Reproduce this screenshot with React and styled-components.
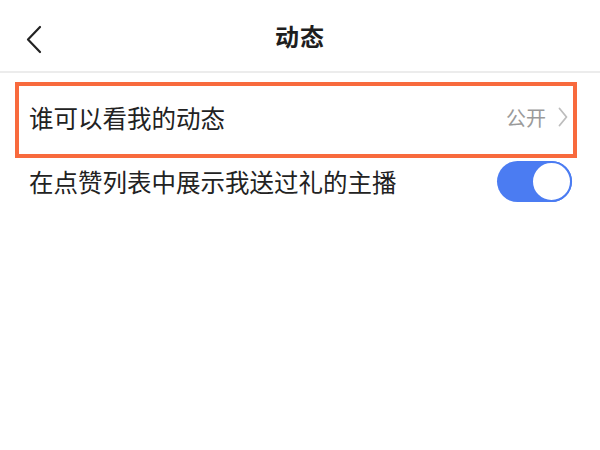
import styled, { createGlobalStyle } from "styled-components";

const GlobalStyle = createGlobalStyle`
  html, body {
    margin: 0;
    padding: 0;
    background: #ffffff;
  }
  body {
    font-family: "Noto Sans CJK SC", "Noto Sans", sans-serif;
  }
`;

const Page = styled.div`
  width: 600px;
  height: 450px;
  background: #ffffff;
  display: flex;
  flex-direction: column;
`;

const Header = styled.header`
  position: relative;
  height: 71px;
  display: flex;
  align-items: center;
  justify-content: center;
  border-bottom: 2px solid #ececec;
`;

const BackButton = styled.button`
  position: absolute;
  left: 25px;
  top: 25px;
  padding: 0;
  border: none;
  background: none;
  display: flex;
`;

const Title = styled.h1`
  margin: 0;
  font-size: 24px;
  font-weight: 700;
  color: #1e1e1e;
  letter-spacing: 1px;
`;

const List = styled.div`
  display: flex;
  flex-direction: column;
`;

const Highlight = styled.div`
  margin: 9px 23px 0 15px;
  border: 4px solid #f86a3d;
`;

const Row = styled.div`
  display: flex;
  align-items: center;
  justify-content: space-between;
  height: ${(p) => p.$height}px;
  padding: ${(p) => p.$pad};
`;

const Label = styled.span`
  font-size: 24.5px;
  color: #222222;
`;

const Value = styled.span`
  display: flex;
  align-items: center;
  gap: 12px;
  font-size: 20px;
  color: #9a9a9a;
`;

const Toggle = styled.div`
  width: 75px;
  height: 41px;
  border-radius: 21px;
  background: ${(p) => (p.$on ? "#4b7cf2" : "#dcdcdc")};
  display: flex;
  align-items: center;
  justify-content: ${(p) => (p.$on ? "flex-end" : "flex-start")};
  box-sizing: border-box;
`;

const Knob = styled.div`
  width: 41px;
  height: 41px;
  border-radius: 50%;
  background: #ffffff;
  border: 2px solid #4b7cf2;
  box-sizing: border-box;
`;

export default function App() {
  return (
    <Page>
      <GlobalStyle />
      <Header>
        <BackButton>
          <svg width="17" height="29" viewBox="0 0 17 29">
            <path d="M15 2 L3 14.5 L15 27" fill="none" stroke="#222" strokeWidth="2.2" strokeLinecap="round" strokeLinejoin="round" />
          </svg>
        </BackButton>
        <Title>动态</Title>
      </Header>
      <List>
        <Highlight>
          <Row $height={62} $pad="0 5px 6px 10px">
            <Label>谁可以看我的动态</Label>
            <Value>
              公开
              <svg width="10" height="20" viewBox="0 0 10 20">
                <path d="M1.5 1.5 L8.5 10 L1.5 18.5" fill="none" stroke="#bdbdbd" strokeWidth="1.8" strokeLinecap="round" strokeLinejoin="round" />
              </svg>
            </Value>
          </Row>
        </Highlight>
        <Row $height={46} $pad="0 28px 0 29px">
          <Label>在点赞列表中展示我送过礼的主播</Label>
          <Toggle $on>
            <Knob />
          </Toggle>
        </Row>
      </List>
    </Page>
  );
}
